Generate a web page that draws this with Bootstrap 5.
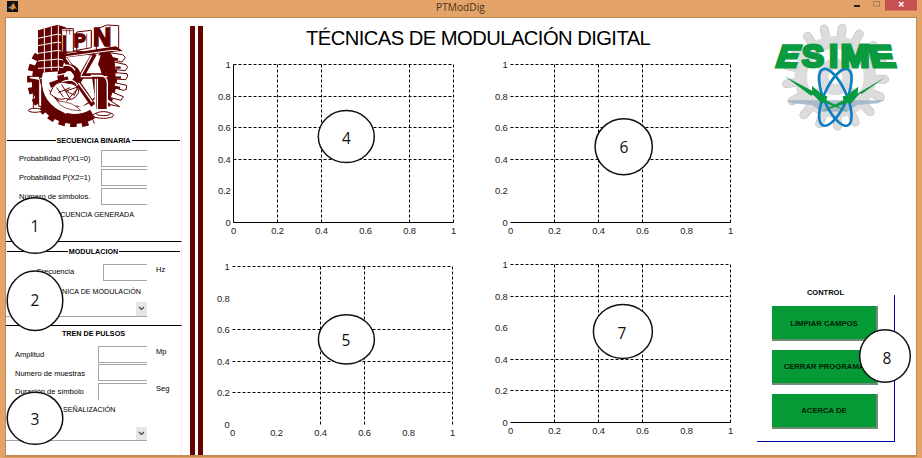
<!DOCTYPE html>
<html lang="es">
<head>
    <meta charset="UTF-8" />
    <meta name="viewport" content="width=device-width, initial-scale=1.0" />
    <title>PTModDig</title>
    <link href="https://cdn.jsdelivr.net/npm/bootstrap@5.3.3/dist/css/bootstrap.min.css" rel="stylesheet" />
    <style>
        body {
            width: 922px;
            height: 458px;
            overflow: hidden;
            background: #e3a369;
            font-family: "Liberation Sans", Arial, sans-serif;
            font-size: 7.5px;
            line-height: 10px;
            color: #000;
        }

        svg { display: block; flex: none; }

        .titlebar { height: 17px; }
        .app-icon { margin: 1px 0 0 7px; }
        .window-title {
            width: 49px;
            margin-left: 418px;
            margin-top: 1px;
            font: 10.2px/12px "Open Sans", sans-serif;
            color: #4a3520;
            white-space: nowrap;
        }
        .window-buttons { margin-right: 5px; }

        .workspace {
            height: 440px;
            margin: 0 5px 0 5px;
            border: 1px solid #c08a55;
            border-bottom-width: 2px;
            background: #fff;
        }

        /* left column */
        .sidebar { width: 184px; }
        .ipn-logo { margin: 4px 0 1px 19px; }
        .stripes {
            width: 13px;
            margin-top: 8px;
            background: linear-gradient(90deg, #640000 5px, #fff 5px, #fff 8px, #640000 8px);
        }
        .group { width: 176px; border-right: 1px solid #eee; }
        .group-title {
            height: 10px;
            font-size: 7.2px;
            font-weight: bold;
            white-space: nowrap;
        }
        .group-title.ruled::before,
        .group-title.ruled::after {
            content: "";
            flex: 1;
            height: 1px;
            background: #000;
            margin: 0 1px;
        }
        .g-binary { height: 106px; margin-top: 7.5px; border-bottom: 1px solid #000; }
        .g-mod { height: 79px; margin-top: 5px; border-bottom: 1px solid #000; }
        .g-pulse { height: 128px; padding-top: 3px; }

        .field { height: 17px; margin-bottom: 2px; white-space: nowrap; }
        .field-name { width: 95px; padding: 2px 0 0 13px; }
        .g-mod .field-name { width: 97px; padding-left: 31px; }
        .g-pulse .field-name { width: 92px; padding-left: 9px; }
        .g-pulse .field { height: 16.5px; }
        .box {
            width: 46px;
            height: 17px;
            border: 1px solid #a5a5a5;
            border-right: 0;
        }
        .g-mod .box { width: 44px; }
        .g-pulse .box { width: 49px; }
        .unit { padding-left: 9px; padding-bottom: 5px; }
        .caption { font-size: 7.15px; white-space: nowrap; }
        .dropdown-box {
            width: 141px;
            height: 15px;
            border-bottom: 1px solid #a5a5a5;
        }
        .dropdown-arrow { width: 11px; background: #e6e6e6; }

        /* plots */
        .plots { width: 552px; }
        .main-title {
            margin: 8px 0 0 103px;
            height: 24px;
            font-size: 20.2px;
            letter-spacing: -0.55px;
            line-height: 24px;
            white-space: nowrap;
        }
        .plot text { font-size: 9.4px; letter-spacing: -0.2px; fill: #222; }
        .plot .grid-line { stroke: #000; stroke-dasharray: 3 2; }
        .plot .axis-line { stroke: #000; }

        /* right column */
        .control-side { width: 161px; }
        .esime-logo { margin: 4px 0 0 17px; }
        .control-title { margin: 156px 0 0 2px; width: 137px; font-size: 7.5px; }
        .control-frame {
            width: 138px;
            height: 147px;
            margin: -3px 0 0 2px;
            padding-top: 11px;
            border-right: 1px solid #00009a;
            border-bottom: 1px solid #00009a;
        }
        .btn-ctl {
            width: 106px;
            height: 35px;
            margin: 0 0 8.8px 15px;
            padding: 2px 0 0;
            border: 1px solid #718d76;
            border-width: 0 2px 2px 0;
            border-radius: 0;
            background: #069a36;
            color: #001c05;
            font-size: 7.7px;
            font-weight: bold;
            line-height: 10px;
        }

        /* numbered markers over the window */
        .markers { left: 0; top: 0; pointer-events: none; }
        .markers ellipse { fill: #fff; stroke: #111; stroke-width: 1.5; }
        .markers text {
            font: 15.5px "Open Sans", "Noto Sans", sans-serif;
            text-anchor: middle;
            fill: #111;
        }
    </style>
</head>
<body class="position-relative">

<div class="titlebar d-flex align-items-start">
    <svg class="app-icon" width="11" height="11" viewBox="0 0 11 11">
        <rect width="11" height="11" fill="#111"/>
        <path d="M1 6.5 4 5 6 2 5 7 3 8z" fill="#4f8fae"/>
        <path d="M6.3 1.5 10 8.5 7.7 7.3 5 9.5 4 7.5z" fill="#e8862c"/>
    </svg>
    <div class="window-title">PTModDig</div>
    <svg class="window-buttons ms-auto" width="64" height="12" viewBox="0 0 64 12">
        <path d="M1 6h6" stroke="#222" stroke-width="2"/>
        <rect x="20.5" y="1.5" width="6" height="4.5" fill="none" stroke="#a87950"/>
        <rect x="32" width="32" height="10.5" fill="#c75050"/>
        <path d="m46 2 4.5 4.5m0-4.5L46 6.5" stroke="#fff" stroke-width="1.5"/>
    </svg>
</div>

<div class="workspace d-flex">

    <div class="sidebar d-flex flex-column">
        <svg class="ipn-logo" width="106.7" height="105" viewBox="75 70 320 315">
            <g fill="none" stroke="#640000">
                <path d="M114 168A134 134 0 0 0 280 364" stroke-width="22" stroke-dasharray="19 15"/>
                <path d="M127 190A112 112 0 0 0 278 346" stroke-width="30"/>
                <path d="M298 165Q352 210 308 315" stroke-width="48"/>
            </g>
            <!-- right hand teeth -->
            <g fill="#fff" stroke="#640000" stroke-width="3">
                <path d="M330 162l38 6 8 8-10 14-24-5zM342 190l36 8 5 8-8 10-30-3zM345 222l36 3 2 8-6 10-32-2zM344 252l36 8-1 12-8 3-30-8zM336 280l34 14-7 11-32-8zM325 302l34 22-27-6-12-9z"/>
                <path d="M334 178l20 5M346 207h16M345 237h18M340 264l20 4" stroke-width="7"/>
            </g>
            <!-- wheel -->
            <circle cx="225" cy="240" r="83" fill="#fff" stroke="#640000" stroke-width="4"/>
            <path d="M190 170h112l-15 50-50 10 35 75-28 20-70-25-40-40-6-50 50-20z" fill="#fff"/>
            <g stroke="#640000" fill="none">
                <path d="M190 175 240 240 283 165M228 245 280 320M235 232h85M205 240l-55 20" stroke-width="16"/>
                <path d="M193 170 240 235 275 170M235 252 277 310M240 234h82" stroke="#fff" stroke-width="4"/>
                <circle cx="207" cy="232" r="25" stroke-width="20"/>
                <path d="M130 220l60-15M120 240l75-15M180 205q30-15 45 10M185 250q35-15 48 10" stroke="#fff" stroke-width="4"/>
                <path d="M150 285q15-45 50-32 38 2 36 28-15 30-40 18-20 10-46-14z" fill="#fff" stroke-width="3"/>
                <path d="M170 267l20 28m-5-37 25 42m0-33-35 15m58-12-34 38" stroke-width="3"/>
                <path d="M198 277l35-12-10 25z" stroke-width="3"/>
                <path d="M130 255Q145 315 200 343" stroke="#fff" stroke-width="6"/>
                <path d="M170 305q15 30 72 31-20-25-62-28z" fill="#fff" stroke-width="2"/>
            </g>
            <path d="M276 234h26q20 0 20 22v75h-33z" fill="#640000"/>
            <path d="M286 240v100M292 240v95M322 253v90M272 230h30q20 3 20 24" fill="none" stroke="#fff" stroke-width="4"/>
            <path d="M88 233h30l7 30v60h-9v-78l-28-5zM100 278v50" fill="#fff" stroke="#640000" stroke-width="3"/>
            <g fill="#fff" stroke="#640000" stroke-width="3">
                <ellipse cx="105" cy="335" rx="20" ry="6"/>
                <ellipse cx="310" cy="350" rx="31" ry="9"/>
                <ellipse cx="310" cy="345" rx="21" ry="6"/>
            </g>
            <!-- tower -->
            <path d="M114 95 173 78 197 86 199 170 184 218 114 222z" fill="#640000"/>
            <path d="M133 90v130M154 85v130M175 80v136M114 119l61-13 14 6M114 141l61-11 14 5M114 164l61-9 14 4M114 187l61-6 14 3M114 209l61-4 14 2" fill="none" stroke="#fff" stroke-width="3"/>
            <!-- lettering blocks -->
            <path d="M185 90h35v70h-35zM230 100l44-5v52l-44 8zM289 91l32-12 35 2v68l-67 5z" fill="#fff" stroke="#640000" stroke-width="3"/>
            <path d="M188 96h30M200 90v18M209 90v18M260 105v42M274 100v45M330 82v63" stroke="#640000" stroke-width="2"/>
            <g fill="#640000" stroke="#640000" stroke-width="5" font-family="Liberation Sans" font-weight="bold">
                <text x="187" y="166" font-size="78" textLength="14" lengthAdjust="spacingAndGlyphs">I</text>
                <text x="221" y="145" font-size="57" textLength="36" lengthAdjust="spacingAndGlyphs">P</text>
                <text x="279" y="143" font-size="80" textLength="54" lengthAdjust="spacingAndGlyphs">N</text>
            </g>
            <path d="M181 168 348 143l20 14-55 5-125 16z" fill="#640000"/>
            <path d="M198 174 335 155l20 2" fill="none" stroke="#fff" stroke-width="3"/>
        </svg>

        <div class="group g-binary">
            <div class="group-title ruled d-flex align-items-center">SECUENCIA BINARIA</div>
            <div class="field d-flex align-items-center mt-1"><span class="field-name">Probabilidad P(X1=0)</span><span class="box"></span></div>
            <div class="field d-flex align-items-center"><span class="field-name">Probabilidad P(X2=1)</span><span class="box"></span></div>
            <div class="field d-flex align-items-center"><span class="field-name">Número de símbolos.</span><span class="box"></span></div>
            <div class="caption text-end" style="padding: 3px 47px 0 0">SECUENCIA GENERADA</div>
        </div>

        <div class="group g-mod">
            <div class="group-title ruled d-flex align-items-center">MODULACION</div>
            <div class="field d-flex align-items-center" style="margin-top: 7px"><span class="field-name pt-0">Frecuencia</span><span class="box"></span><span class="unit">Hz</span></div>
            <div class="caption text-end" style="padding: 4px 40px 5px 0">TÉCNICA DE MODULACIÓN</div>
            <div class="dropdown-box d-flex justify-content-end">
                <span class="dropdown-arrow d-flex align-items-center justify-content-center">
                    <svg width="7" height="5" viewBox="0 0 7 5"><path d="m1 1 2.5 2.5L6 1" fill="none" stroke="#444" stroke-width="1.2"/></svg>
                </span>
            </div>
        </div>

        <div class="group g-pulse">
            <div class="group-title d-flex justify-content-center">TREN DE PULSOS</div>
            <div class="field d-flex align-items-center" style="margin-top: 7.5px"><span class="field-name">Amplitud</span><span class="box"></span><span class="unit pb-1">Mp</span></div>
            <div class="field d-flex align-items-center"><span class="field-name">Numero de muestras</span><span class="box"></span></div>
            <div class="field d-flex align-items-center"><span class="field-name">Duración de símbolo</span><span class="box border-bottom-0"></span><span class="unit">Seg</span></div>
            <div class="caption" style="padding: 3px 0 12px 57px">SEÑALIZACIÓN</div>
            <div class="dropdown-box d-flex justify-content-end" style="height: 14px">
                <span class="dropdown-arrow d-flex align-items-center justify-content-center">
                    <svg width="7" height="5" viewBox="0 0 7 5"><path d="m1 1 2.5 2.5L6 1" fill="none" stroke="#444" stroke-width="1.2"/></svg>
                </span>
            </div>
        </div>
    </div>

    <div class="stripes"></div>

    <div class="plots">
        <div class="main-title">TÉCNICAS DE MODULACIÓN DIGITAL</div>
        <div class="d-flex">
            <div>
                <svg class="plot" id="plot4" width="278" height="202"></svg>
                <svg class="plot" id="plot5" width="278" height="200"></svg>
            </div>
            <div>
                <svg class="plot" id="plot6" width="274" height="200"></svg>
                <svg class="plot" id="plot7" width="274" height="202"></svg>
            </div>
        </div>
    </div>

    <div class="control-side">
        <svg class="esime-logo" width="126.7" height="110" viewBox="70 65 380 330">
            <g id="esimeGear" stroke="#dcdcdc" fill="none"></g>
            <path d="M112 300h294l-18 9-63 5-30 20h-75l-30-20-60-5z" fill="#9fb3c5" opacity=".85"/>
            <g fill="none" stroke="#0d7ec4" stroke-width="8">
                <ellipse cx="260" cy="291" rx="34" ry="92" transform="rotate(24 260 291)"/>
                <ellipse cx="260" cy="291" rx="34" ry="92" transform="rotate(-24 260 291)"/>
            </g>
            <g fill="#0a9a3f">
                <path d="M108 228 190 271v-14l34 28 12 3-3 12 67 35-75-29-4 5-28-28-6 3z"/>
                <path d="M409 231 326 280l3-21-38 27-9 2 2 12-64 33 78-26 8 4 28-32 5 2z"/>
            </g>
            <g fill="#0a9a3f" stroke="#0a9a3f" stroke-width="9" font-family="Liberation Sans" font-weight="bold" font-size="93">
                <text transform="translate(77 199) skewX(-18)" textLength="66" lengthAdjust="spacingAndGlyphs">E</text>
                <text x="160" y="199" textLength="66" lengthAdjust="spacingAndGlyphs">S</text>
                <text x="242" y="199" textLength="26" lengthAdjust="spacingAndGlyphs">I</text>
                <text x="276" y="199" textLength="86" lengthAdjust="spacingAndGlyphs">M</text>
                <text transform="translate(369 199) skewX(14)" textLength="75" lengthAdjust="spacingAndGlyphs">E</text>
            </g>
        </svg>
        <div class="control-title text-center fw-bold">CONTROL</div>
        <div class="control-frame">
            <button class="btn btn-ctl d-block">LIMPIAR CAMPOS</button>
            <button class="btn btn-ctl d-block">CERRAR PROGRAMA</button>
            <button class="btn btn-ctl d-block">ACERCA DE</button>
        </div>
    </div>
</div>

<svg class="markers position-absolute" width="922" height="458" id="markers"></svg>

<script src="https://cdn.jsdelivr.net/npm/bootstrap@5.3.3/dist/js/bootstrap.bundle.min.js"></script>
<script>
    // grid lines shown on each axes, in data units
    const plots = [
        { id: "plot4", x: 30.5, y: 14.5, vert: [0.2, 0.4, 0.8, 1], horiz: [0.4, 0.6, 0.8, 1], left: true, bottom: true },
        { id: "plot5", x: 29.5, y: 14.5, vert: [0.4, 0.6, 1], horiz: [0.2, 0.4, 0.6, 1] },
        { id: "plot6", x: 29.5, y: 14.5, vert: [0.2, 0.4, 0.6, 1], horiz: [0.4, 0.6, 0.8, 1], bottom: true },
        { id: "plot7", x: 29.5, y: 14.5, vert: [0.2, 0.4, 0.6, 1], horiz: [0.2, 0.4, 0.8, 1], bottom: true }
    ];
    const W = 220, H = 158;

    function line(cls, x1, y1, x2, y2) {
        return `<line class="${cls}" x1="${x1}" y1="${y1}" x2="${x2}" y2="${y2}"/>`;
    }

    plots.forEach(p => {
        const px = v => Math.round(v * W) + p.x;
        const py = v => Math.round((1 - v) * H) + p.y;
        let out = "";
        p.vert.forEach(v => out += line("grid-line", px(v), py(1), px(v), py(0)));
        p.horiz.forEach(v => out += line("grid-line", px(0), py(v), px(1), py(v)));
        if (p.left) out += line("axis-line", px(0), py(0), px(0), py(1));
        if (p.bottom) out += line("axis-line", px(0), py(0), px(1), py(0));
        [0, 0.2, 0.4, 0.6, 0.8, 1].forEach(v => {
            out += `<text x="${px(v)}" y="${py(0) + 11.5}" text-anchor="middle">${v}</text>`;
            out += `<text x="${px(0) - 3}" y="${py(v) + 3.5}" text-anchor="end">${v}</text>`;
        });
        document.getElementById(p.id).innerHTML = out;
    });

    // gear behind the ESIME lettering
    let gear = "";
    for (let i = 0; i < 17; i++) {
        const turn = 8 + i * 360 / 17;
        gear += `<g transform="rotate(${turn} 260 230)"><path d="M260 120V82" stroke="#b9b9b9" stroke-width="26" stroke-linecap="round"/><path d="M260 125V82" stroke-width="23" stroke-linecap="round"/></g>`;
    }
    gear += `<circle cx="260" cy="230" r="104" stroke-width="38"/><circle cx="260" cy="230" r="38" stroke-width="34"/>`;
    gear += `<path d="M260 130v60M180 175l50 35M340 175l-50 35M180 290l50-35M340 290l-50-35" stroke-width="14"/>`;
    document.getElementById("esimeGear").innerHTML = gear;

    // cx, cy, rx, ry, number x, number baseline
    const markers = [
        [35, 225.5, 27.8, 27.8, 35, 231.5],
        [35, 300.8, 27.8, 29.7, 35, 306],
        [35, 418.3, 27.8, 26, 35, 425],
        [346.3, 136.6, 28, 26, 346.5, 143.5],
        [346.4, 339.4, 28, 24.6, 346, 346],
        [623.7, 146.7, 28.6, 28, 624, 152.5],
        [622.9, 331.4, 29.5, 27, 622, 338.5],
        [885, 356, 25.3, 26.3, 887, 363.5]
    ];
    document.getElementById("markers").innerHTML = markers.map((m, i) =>
        `<ellipse cx="${m[0]}" cy="${m[1]}" rx="${m[2]}" ry="${m[3]}"/><text x="${m[4]}" y="${m[5]}">${i + 1}</text>`
    ).join("");
</script>

</body>
</html>
